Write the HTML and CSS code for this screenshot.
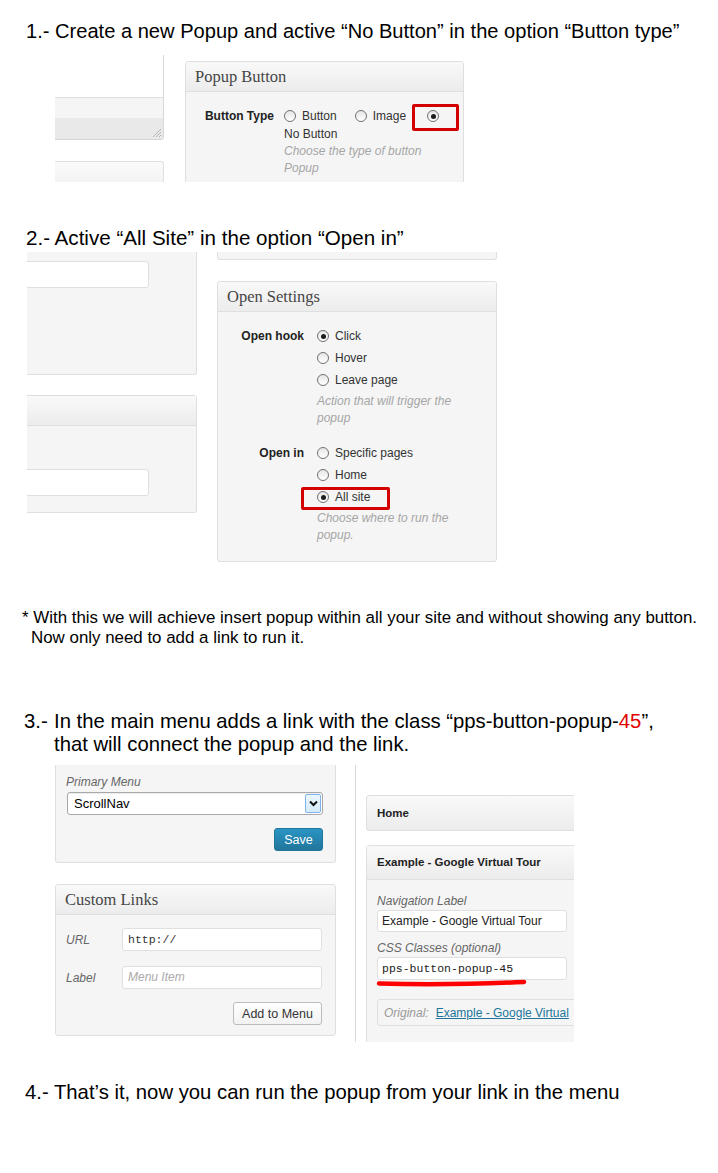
FILE: index.html
```html
<!DOCTYPE html>
<html lang="en">
<head>
<meta charset="utf-8">
<title>Popup link setup</title>
<link rel="stylesheet" href="styles.css">
</head>
<body>
<main class="doc">
  <h2 class="step-title t1">1.- Create a new Popup and active “No Button” in the option “Button type”</h2>
  <div class="shot shot1">
    <div class="s1-left">
      <div class="ta-box">
        <div class="ta-top"></div>
        <div class="ta-band1"></div>
        <div class="ta-band2">
          <svg class="grip" width="10" height="10" viewBox="0 0 10 10"><path d="M9 1L1 9M9 4L4 9M9 7L7 9" stroke="#b5b5b5" stroke-width="1"/></svg>
        </div>
      </div>
      <div class="stub-top"></div>
    </div>
    <div class="panel pb-panel">
      <div class="panel-h">Popup Button</div>
      <div class="pb-body">
        <div class="frow">
          <div class="flabel pb-label">Button Type</div>
          <div class="fval">
            <div class="opt-line">
              <span class="opt"><span class="radio"></span>Button</span>
              <span class="opt"><span class="radio"></span>Image</span>
              <span class="opt opt-last"><span class="radio on"></span></span>
            </div>
            <div class="opt-line">No Button</div>
            <p class="help">Choose the type of button<br>Popup</p>
          </div>
        </div>
      </div>
    </div>
    <div class="mark mark1"></div>
  </div>

  <h2 class="step-title t2">2.- Active “All Site” in the option “Open in”</h2>
  <div class="shot shot2">
    <div class="s2-left">
      <div class="cpanel cpA"><div class="inp inpA"></div></div>
      <div class="cpanel cpB"><div class="cp-h"></div><div class="inp inpB"></div></div>
    </div>
    <div class="s2-right">
      <div class="stub-bottom"></div>
      <div class="panel os-panel">
        <div class="panel-h">Open Settings</div>
        <div class="os-body">
          <div class="frow">
            <div class="flabel os-label">Open hook</div>
            <div class="fval">
              <div class="opt-row"><span class="radio on"></span>Click</div>
              <div class="opt-row"><span class="radio"></span>Hover</div>
              <div class="opt-row"><span class="radio"></span>Leave page</div>
              <p class="help os-help">Action that will trigger the<br>popup</p>
            </div>
          </div>
          <div class="frow frow2">
            <div class="flabel os-label">Open in</div>
            <div class="fval">
              <div class="opt-row"><span class="radio"></span>Specific pages</div>
              <div class="opt-row"><span class="radio"></span>Home</div>
              <div class="opt-row"><span class="radio on"></span>All site</div>
              <p class="help os-help">Choose where to run the<br>popup.</p>
            </div>
          </div>
        </div>
      </div>
    </div>
    <div class="mark mark2"></div>
  </div>

  <p class="note">* With this we will achieve insert popup within all your site and without showing any button.<br>Now only need to add a link to run it.</p>

  <h2 class="step-title t3"><span class="num">3.-</span><span>In the main menu adds a link with the class “pps-button-popup-<span class="red">45</span>”,<br>that will connect the popup and the link.</span></h2>

  <div class="shot shot3">
    <div class="s3-left">
      <div class="panel mp-panel">
        <div class="field-label">Primary Menu</div>
        <div class="select"><span>ScrollNav</span><span class="sel-arrow"><svg width="9" height="7" viewBox="0 0 9 7"><path d="M1 1.5L4.5 5L8 1.5" fill="none" stroke="#111" stroke-width="2"/></svg></span></div>
        <div class="btn-row"><span class="btn btn-primary">Save</span></div>
      </div>
      <div class="panel cl-panel">
        <div class="panel-h">Custom Links</div>
        <div class="cl-body">
          <div class="cl-row"><span class="cl-label">URL</span><span class="inp cl-inp mono">http://</span></div>
          <div class="cl-row cl-row2"><span class="cl-label">Label</span><span class="inp cl-inp ph">Menu Item</span></div>
          <div class="btn-row btn-row2"><span class="btn btn-sec">Add to Menu</span></div>
        </div>
      </div>
    </div>
    <div class="s3-divider"></div>
    <div class="s3-right">
      <div class="menu-item mi-home">Home</div>
      <div class="menu-item mi-open">
        <div class="mi-h">Example - Google Virtual Tour</div>
        <div class="mi-b">
          <div class="field-label fl-nav">Navigation Label</div>
          <div class="inp mi-inp">Example - Google Virtual Tour</div>
          <div class="field-label fl-css">CSS Classes (optional)</div>
          <div class="inp mi-inp mi-inp2 mono">pps-button-popup-45</div>
          <div class="orig"><span class="orig-l">Original:</span><span class="orig-link">Example - Google Virtual</span></div>
        </div>
      </div>
    </div>
    <svg class="underline" width="152" height="10" viewBox="0 0 152 10"><path d="M3 5.5Q70 7.5 148 4" fill="none" stroke="#f00" stroke-width="4.5" stroke-linecap="round"/></svg>
  </div>

  <h2 class="step-title t4">4.- That’s it, now you can run the popup from your link in the menu</h2>
</main>
</body>
</html>
```

FILE: styles.css
```css
* { box-sizing: border-box; }
html, body { margin: 0; padding: 0; background: #fff; }
body { font-family: "Liberation Sans", Arial, sans-serif; color: #000; }
.doc { width: 718px; overflow: hidden; padding-bottom: 60px; }

.step-title { margin: 0; font-weight: normal; font-size: 20.1px; line-height: 24px; color: #000; }
.t1 { margin: 19px 0 0 26px; }
.t2 { margin: 44px 0 0 26px; font-size: 20.6px; }
.t3 { display: flex; margin: 62px 0 0 24px; line-height: 23px; font-size: 20.3px; }
.t3 .num { width: 30px; flex: none; }
.t3 .red { color: #e00000; }
.t4 { margin: 38px 0 0 25px; font-size: 20.3px; }

.note { margin: 46px 0 0 0; padding-left: 31px; text-indent: -9px; font-size: 16.9px; line-height: 20px; }

/* generic screenshot pieces */
.shot { position: relative; overflow: hidden; display: flex; align-items: flex-start; font-size: 12px; color: #333; }
.panel { border: 1px solid #dfdfdf; border-radius: 3px; background: #f5f5f5; overflow: hidden; flex: none; }
.panel-h { height: 30px; padding: 0 9px; border-bottom: 1px solid #dfdfdf; background: linear-gradient(#f9f9f9, #ececec); font-family: "Liberation Serif", "DejaVu Serif", serif; font-size: 16.5px; line-height: 29px; color: #464646; }
.inp { display: block; background: #fff; border: 1px solid #dfdfdf; border-radius: 3px; }
.radio { width: 12px; height: 12px; flex: none; border: 1px solid #707070; border-radius: 50%; background: linear-gradient(#e6e6e6, #fff); display: inline-flex; align-items: center; justify-content: center; }
.radio.on::after { content: ""; width: 5px; height: 5px; border-radius: 50%; background: #1c1c1c; }
.frow { display: flex; align-items: flex-start; }
.flabel { flex: none; font-weight: bold; color: #222; text-align: right; }
.help { margin: 0; font-style: italic; color: #a5a5a5; line-height: 17px; }
.mark { position: absolute; border: 3px solid #d40000; border-radius: 2px; }

/* shot 1 */
.shot1 { margin: 12px 0 0 55px; width: 409px; height: 127px; }
.s1-left { width: 109px; flex: none; display: flex; flex-direction: column; }
.ta-box { height: 85px; border-right: 1px solid #d8d8d8; border-bottom: 1px solid #d4d4d4; border-bottom-right-radius: 3px; overflow: hidden; }
.ta-top { height: 42px; background: #fff; }
.ta-band1 { height: 21px; background: #f5f5f5; border-top: 1px solid #dedede; }
.ta-band2 { height: 21px; background: #e9e9e9; position: relative; }
.grip { position: absolute; right: 1px; bottom: 1px; }
.stub-top { margin-top: 21px; height: 30px; border-top: 1px solid #dfdfdf; border-right: 1px solid #dfdfdf; border-top-right-radius: 3px; background: linear-gradient(#fafafa, #f1f1f1); }
.pb-panel { margin: 6px 0 0 21px; width: 279px; height: 140px; }
.pb-body { padding-top: 15px; }
.pb-label { width: 88px; line-height: 18px; }
.pb-panel .fval { margin-left: 10px; }
.opt-line { display: flex; align-items: center; height: 18px; }
.opt { display: inline-flex; align-items: center; gap: 6px; margin-right: 18px; }
.opt-last { margin-left: 3px; }
.mark1 { left: 357px; top: 49px; width: 47px; height: 27px; }

/* shot 2 */
.shot2 { margin: 2px 0 0 27px; width: 470px; height: 310px; gap: 20px; }
.s2-left { width: 170px; flex: none; display: flex; flex-direction: column; }
.cpanel { background: #f5f5f5; border: 1px solid #dfdfdf; border-left: 0; }
.cpA { height: 123px; border-top: 0; border-bottom-right-radius: 3px; padding-top: 9px; }
.inpA { margin-left: -6px; width: 128px; height: 27px; }
.cpB { margin-top: 20px; height: 118px; border-radius: 0 3px 3px 0; }
.cp-h { height: 30px; border-bottom: 1px solid #dfdfdf; background: linear-gradient(#f9f9f9, #ececec); }
.inpB { margin: 43px 0 0 -6px; width: 128px; height: 27px; }
.s2-right { width: 280px; flex: none; display: flex; flex-direction: column; }
.stub-bottom { height: 8px; background: #f5f5f5; border: 1px solid #dfdfdf; border-top: 0; border-radius: 0 0 3px 3px; }
.os-panel { margin-top: 21px; height: 281px; }
.os-body { padding-top: 13px; }
.os-label { width: 86px; line-height: 22px; }
.os-panel .fval { margin-left: 13px; }
.opt-row { display: flex; align-items: center; gap: 6px; height: 22px; }
.os-help { margin-top: 2px; }
.frow2 { margin-top: 15px; }
.mark2 { left: 274px; top: 235px; width: 89px; height: 23px; }

/* shot 3 */
.shot3 { margin: 9px 0 0 55px; width: 519px; height: 277px; }
.s3-left { width: 281px; flex: none; display: flex; flex-direction: column; }
.field-label { font-style: italic; color: #666; line-height: 16px; }
.mp-panel { margin-top: -5px; height: 103px; padding: 14px 12px 0 10px; border-top: 0; border-radius: 0 0 3px 3px; }
.select { margin: 2px 0 0 1px; height: 23px; display: flex; align-items: center; padding-left: 6px; background: #fff; border: 1px solid #a9a9a9; border-radius: 3px; box-shadow: inset 0 1px 1px rgba(0,0,0,.08); font-size: 13px; color: #000; }
.sel-arrow { margin-left: auto; margin-right: 1px; width: 16px; height: 19px; border: 1px solid #7eb4ea; border-radius: 2px; background: linear-gradient(#eaf6fd, #d6ebfa); display: flex; align-items: center; justify-content: center; }
.btn-row { display: flex; justify-content: flex-end; margin-top: 13px; }
.btn { display: inline-flex; align-items: center; justify-content: center; height: 23px; border-radius: 3px; font-size: 12.5px; }
.btn-primary { width: 49px; color: #fff; background: linear-gradient(#2a95c5, #21759b); border: 1px solid #21759b; }
.cl-panel { margin-top: 21px; height: 152px; }
.cl-body { padding: 13px 13px 0 10px; }
.cl-row { display: flex; align-items: center; }
.cl-row2 { margin-top: 15px; }
.cl-label { width: 56px; font-style: italic; color: #666; }
.cl-inp { width: 200px; height: 23px; line-height: 21px; padding-left: 5px; }
.mono { font-family: "Liberation Mono", "DejaVu Sans Mono", monospace; font-size: 11.5px; color: #333; }
.ph { font-style: italic; color: #aaa; }
.btn-row2 { margin-top: 13px; }
.btn-sec { width: 89px; color: #333; background: linear-gradient(#fefefe, #f2f2f2); border: 1px solid #bbb; }
.s3-divider { margin-left: 19px; width: 1px; height: 277px; flex: none; background: #dadada; }
.s3-right { flex: none; width: 218px; padding-left: 10px; display: flex; flex-direction: column; }
.menu-item { width: 230px; border: 1px solid #dfdfdf; border-radius: 3px; flex: none; }
.mi-home { margin-top: 30px; height: 36px; padding-left: 10px; line-height: 34px; font-weight: bold; font-size: 11.5px; color: #222; background: linear-gradient(#f9f9f9, #ececec); }
.mi-open { margin-top: 14px; height: 220px; background: #f5f5f5; border-radius: 3px 3px 0 0; }
.mi-h { height: 34px; padding-left: 10px; line-height: 33px; font-weight: bold; font-size: 11.5px; color: #222; background: linear-gradient(#f9f9f9, #ececec); border-bottom: 1px solid #dfdfdf; }
.mi-b { padding: 0 10px; }
.fl-nav { margin-top: 13px; }
.mi-inp { margin-top: 1px; width: 190px; height: 22px; line-height: 20px; padding-left: 4px; font-size: 12px; color: #222; }
.fl-css { margin-top: 8px; }
.mi-inp2 { height: 23px; line-height: 21px; font-size: 11.5px; }
.orig { margin-top: 19px; width: 260px; height: 27px; display: flex; align-items: center; padding-left: 6px; border: 1px solid #dfdfdf; border-radius: 3px; background: #f5f5f5; white-space: nowrap; }
.orig-l { font-style: italic; color: #999; }
.orig-link { margin-left: 7px; color: #21759b; text-decoration: underline; }
.underline { position: absolute; left: 321px; top: 213px; }
```
